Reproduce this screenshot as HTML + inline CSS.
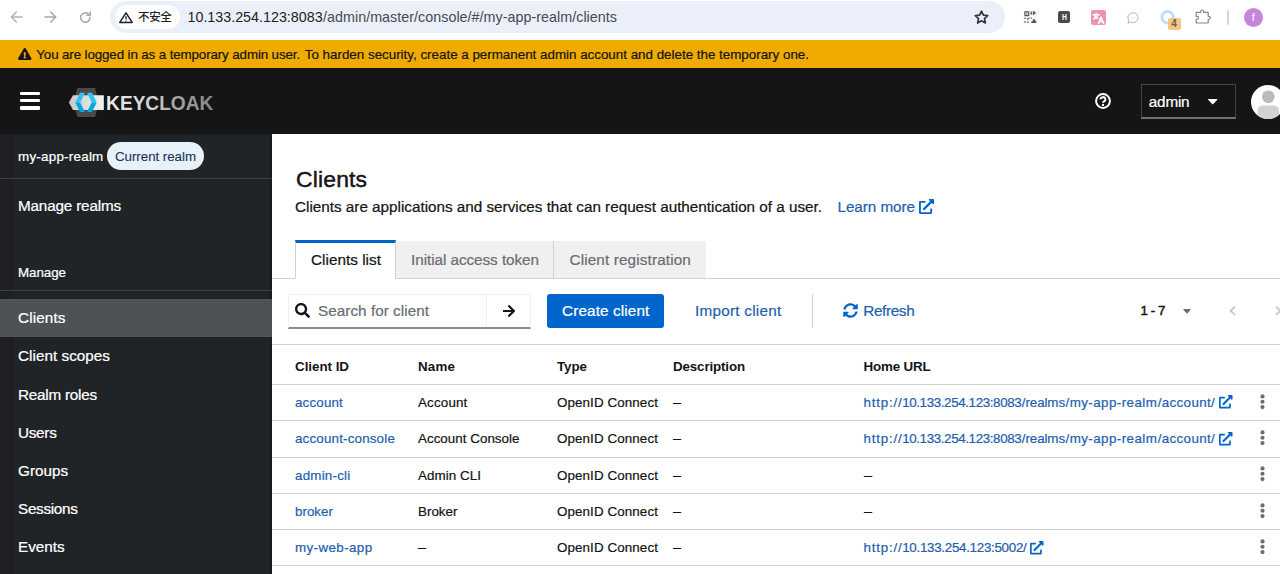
<!DOCTYPE html>
<html lang="en">
<head>
<meta charset="utf-8">
<title>Keycloak Administration Console</title>
<style>
*{box-sizing:border-box;margin:0;padding:0}
html,body{width:1280px;height:574px;overflow:hidden;background:#fff}
body{font-family:"Liberation Sans","Noto Sans CJK SC",sans-serif;color:#151515;position:relative}
.a{position:absolute}
.t{position:absolute;white-space:nowrap;line-height:20px;z-index:5;-webkit-text-stroke:.22px currentColor}
svg{position:absolute;overflow:visible;z-index:4}
.hl{position:absolute;height:1px;background:#d2d2d2}
</style>
</head>
<body>
<!-- ============ browser chrome ============ -->
<div class="a" style="left:0;top:0;width:1280px;height:40px;background:#fff"></div>
<div class="a" style="left:110px;top:1px;width:895px;height:32px;border-radius:16px;background:#ebeff9"></div>
<div class="a" style="left:115px;top:5px;width:65px;height:24px;border-radius:12px;background:#fff"></div>
<!-- back / forward / reload -->
<svg style="left:10px;top:11px" width="13" height="12" viewBox="0 0 13 12" fill="none" stroke="#b4b4b4" stroke-width="1.6" stroke-linecap="round" stroke-linejoin="round"><path d="M12 6H1.5M6.3 1L1.3 6l5 5"/></svg>
<svg style="left:44px;top:11px" width="13" height="12" viewBox="0 0 13 12" fill="none" stroke="#a8a8a8" stroke-width="1.6" stroke-linecap="round" stroke-linejoin="round"><path d="M1 6h10.5M6.7 1l5 5-5 5"/></svg>
<svg style="left:79px;top:11px" width="13" height="13" viewBox="0 0 13 13" fill="none" stroke="#a8a8a8" stroke-width="1.6" stroke-linecap="round" stroke-linejoin="round"><path d="M11 6.5a4.7 4.7 0 1 1-1.6-3.5"/><path d="M11.2 1v3.2H8" /></svg>
<!-- insecure triangle -->
<svg style="left:119px;top:12px" width="14" height="11" viewBox="0 0 14 11" fill="none" stroke="#1f1f1f" stroke-width="1.5" stroke-linejoin="round"><path d="M7 .8L13.2 10.4H.8z"/><path d="M7 4.3v3.2M7 8.4v1" stroke-width="1.3"/></svg>
<!-- star -->
<svg style="left:974.4px;top:10px" width="15" height="14" viewBox="0 0 15 14" fill="none" stroke="#34373c" stroke-width="1.7" stroke-linejoin="round"><path d="M7.5 1.2l1.9 4 4.3.5-3.2 3 .9 4.3-3.9-2.2-3.9 2.2.9-4.3-3.2-3 4.3-.5z"/></svg>
<!-- QR extension -->
<svg style="left:1022.5px;top:10px" width="14.5" height="14" viewBox="0 0 14.5 14" fill="#5a5a5a"><rect x="0" y="0" width="14.5" height="14" rx="2" fill="#fafafa"/><path d="M1.3 1.3h5v5h-5zM2.5 2.5v2.6h2.6V2.5z" fill-rule="evenodd"/><rect x="3.2" y="3.2" width="1.2" height="1.2"/><path d="M7.6 1.6h1.3v3.2H7.6zM9.8 1.3h1.5l1.7 1.9-1 1.1-.9-.9v1.6H9.8z"/><path d="M1.3 7.8h1.3v1.3H1.3zM3.6 9l2.7-1.7.6.9L4.2 10zM1.3 11.2h1.3v1.5H1.3zM3.8 11.4h2.2v1.2H3.8zM7.8 7.6h1.2v1.2H7.8z"/><path d="M8.2 12.9c0-1.4.9-2 1.7-2.1-.4-.9.1-1.9 1.1-1.9s1.6.9 1.3 1.8c.6.1 1.2.7 1.2 2.2z"/></svg>
<!-- H extension -->
<div class="a" style="left:1058px;top:11px;width:12px;height:12px;border-radius:2px;background:#4b4b4b"></div>
<!-- translate extension (pink) -->
<div class="a" style="left:1091px;top:9.5px;width:15px;height:15px;border-radius:2px;background:#e992b2"></div>
<svg style="left:1091px;top:9.5px" width="15" height="15" viewBox="0 0 15 15" fill="none" stroke="#fff" stroke-linecap="round" stroke-linejoin="round"><path d="M2 4.7h6.2M5.1 3.2v1.5M3.2 4.7c.4 1.8 1.8 3.3 3.8 4M7 4.7C6.5 6.7 4.8 8.3 2.6 9" stroke-width="1.4"/><path d="M7.6 13.4l2.5-6.2 2.5 6.2M8.5 11.5h3.2" stroke-width="1.6"/></svg>
<!-- speech bubble -->
<svg style="left:1127px;top:11.5px" width="12" height="12" viewBox="0 0 12 12" fill="none" stroke="#b5b5b5" stroke-width="1"><path d="M6.3.8a4.9 4.9 0 1 1-2.6 9.1L.9 11.3l1-2.6A4.9 4.9 0 0 1 6.3.8z"/><path d="M4.2 5.7h.6M6 5.7h.6M7.8 5.7h.6" stroke-width=".9" stroke="#c5c5c5"/></svg>
<!-- blue ring with badge -->
<svg style="left:1159.5px;top:9.5px" width="16" height="15" viewBox="0 0 16 15" fill="none"><circle cx="7.6" cy="7.3" r="5.7" stroke="#c6dcf2" stroke-width="3"/></svg>
<div class="a" style="left:1167.5px;top:17.5px;width:13px;height:12.5px;border-radius:2.5px;background:#f5c583;z-index:4"></div>
<!-- puzzle piece -->
<svg style="left:1194.5px;top:9px" width="16" height="15" viewBox="0 0 16 15" fill="none" stroke="#878787" stroke-width="1.2" stroke-linejoin="round"><path d="M1.2 3.4h4.5V2.5a1.5 1.5 0 0 1 3 0v.9h4.5v3.9h.6a1.5 1.5 0 0 1 0 3h-.6v3.7H1.2v-3.7h.8a1.5 1.5 0 0 0 0-3h-.8z"/></svg>
<!-- divider + avatar -->
<div class="a" style="left:1226.5px;top:9.5px;width:2px;height:15px;background:#c9d6ec;border-radius:1px"></div>
<div class="a" style="left:1243.7px;top:7.7px;width:19px;height:19px;border-radius:50%;background:#c585da"></div>

<!-- ============ banner ============ -->
<div class="a" style="left:0;top:40px;width:1280px;height:28px;background:#f0ab00"></div>
<svg style="left:18px;top:48px" width="13.5" height="12" viewBox="0 0 576 512"><path fill="#151515" d="M569.517 440.013C587.975 472.007 564.806 512 527.94 512H48.054c-36.937 0-59.999-40.055-41.577-71.987L246.423 23.985c18.467-32.009 64.72-31.951 83.154 0l239.94 416.028zM288 354c-25.405 0-46 20.595-46 46s20.595 46 46 46 46-20.595 46-46-20.595-46-46-46zm-43.673-165.346l7.418 136c.347 6.364 5.609 11.346 11.982 11.346h48.546c6.373 0 11.635-4.982 11.982-11.346l7.418-136c.375-6.874-5.098-12.654-11.982-12.654h-63.383c-6.884 0-12.356 5.78-11.981 12.654z"/></svg>

<!-- ============ masthead ============ -->
<div class="a" style="left:0;top:68px;width:1280px;height:66px;background:#151515"></div>
<!-- hamburger -->
<div class="a" style="left:19.5px;top:91.7px;width:20.5px;height:3.5px;border-radius:1px;background:#fff"></div>
<div class="a" style="left:19.5px;top:98.9px;width:20.5px;height:3.5px;border-radius:1px;background:#fff"></div>
<div class="a" style="left:19.5px;top:106.1px;width:20.5px;height:3.5px;border-radius:1px;background:#fff"></div>
<!-- keycloak logo -->
<svg style="left:68px;top:87px" width="150" height="31" viewBox="0 0 150 31">
  <defs>
    <linearGradient id="kg" x1="0" x2="1" y1="0" y2="0"><stop offset="0" stop-color="#ededed"/><stop offset=".45" stop-color="#d0d0d0"/><stop offset=".6" stop-color="#a9a9a9"/><stop offset="1" stop-color="#858585"/></linearGradient>
    <linearGradient id="kb" x1="0" x2="1" y1="0" y2="0"><stop offset="0" stop-color="#c9c9c9"/><stop offset="1" stop-color="#f2f2f2"/></linearGradient>
  </defs>
  <path d="M5.3 15.4L9.5 .9h17.6l3.5 14.5-3.5 14.5H9.5z" fill="#4a4a4a"/>
  <path d="M.9 15.6l4.1-7.3h30.8v14.7H5z" fill="url(#kb)"/>
  <path d="M7.2 15.4L12 5.8h5l-4.8 9.6z" fill="#2ec4ef"/>
  <path d="M7.2 15.4L12 25h5l-4.8-9.6z" fill="#00a8dc"/>
  <path d="M28.7 15.4l-4.8-9.6h-5l4.8 9.6z" fill="#2ec4ef"/>
  <path d="M28.7 15.4l-4.8 9.6h-5l4.8-9.6z" fill="#00a8dc"/>
  <text x="38.1" y="22.5" font-family="Liberation Sans, sans-serif" font-weight="bold" font-size="20.2" fill="url(#kg)" textLength="107.2" lengthAdjust="spacingAndGlyphs">KEYCLOAK</text>
</svg>
<!-- help icon -->
<svg style="left:1095px;top:92.7px" width="16" height="16" viewBox="0 0 16 16" fill="none" stroke="#fff"><circle cx="8" cy="8" r="6.9" stroke-width="2"/><path d="M5.6 6.4a2.4 2.2 0 1 1 3.5 1.9c-.7.4-1.1.8-1.1 1.5" stroke-width="2"/><circle cx="8" cy="11.9" r="1.2" fill="#fff" stroke="none"/></svg>
<!-- user dropdown -->
<div class="a" style="left:1141px;top:84px;width:95px;height:34.5px;border:1px solid #444548;border-bottom:2px solid #707477"></div>
<svg style="left:1208.4px;top:98.7px" width="9.4" height="5.4" viewBox="0 0 9.4 5.4"><path d="M.5 0h8.4a.5.5 0 0 1 .35.85L5.05 5.2a.5.5 0 0 1-.7 0L.15.85A.5.5 0 0 1 .5 0z" fill="#fff"/></svg>
<!-- avatar -->
<svg style="left:1251px;top:84.5px" width="34" height="34" viewBox="0 0 34 34"><defs><clipPath id="av"><circle cx="17" cy="17" r="17"/></clipPath></defs><circle cx="17" cy="17" r="17" fill="#fff"/><g clip-path="url(#av)"><circle cx="17.3" cy="11.8" r="6.3" fill="#b8bbbe"/><path d="M6.5 34v-8.5c0-3 2.4-5 5.5-5h10.6c3.1 0 5.5 2 5.5 5V34z" fill="#d2d2d2"/></g></svg>

<!-- ============ sidebar ============ -->
<div class="a" style="left:0;top:133px;width:272px;height:441px;background:#212427"></div>
<div class="a" style="left:269px;top:134px;width:3px;height:440px;background:linear-gradient(90deg,#212427,#17181a)"></div>
<div class="a" style="left:0;top:133px;width:272px;height:3px;background:linear-gradient(#151515,#1c1e20 60%,#212427)"></div>
<div class="a" style="left:0;top:136px;width:14px;height:438px;background:rgba(0,0,0,.09)"></div>
<div class="a" style="left:107px;top:142px;width:97px;height:28px;border-radius:14px;background:#e7f1fa"></div>
<div class="a" style="left:0;top:177.5px;width:272px;height:1px;background:#3c3f42"></div>
<div class="a" style="left:0;top:290px;width:272px;height:1px;background:#3c3f42"></div>
<div class="a" style="left:0;top:299px;width:272px;height:38px;background:#4f5255"></div>

<!-- ============ main ============ -->
<!-- tabs -->
<div class="hl" style="left:272px;top:278px;width:1008px"></div>
<div class="a" style="left:396px;top:241px;width:310px;height:37px;background:#f0f0f0"></div>
<div class="a" style="left:553px;top:241px;width:1px;height:37px;background:#d2d2d2"></div>
<div class="a" style="left:295px;top:240px;width:101px;height:39px;background:#fff;border-left:1px solid #d2d2d2;border-right:1px solid #d2d2d2;border-top:3px solid #0066cc"></div>
<!-- toolbar -->
<div class="a" style="left:288px;top:294px;width:243px;height:35px;background:#fff;border:1px solid #f0f0f0;border-bottom:2px solid #8a8d90"></div>
<div class="a" style="left:486px;top:295px;width:1px;height:32px;background:#f0f0f0"></div>
<svg style="left:295.3px;top:303.2px" width="15" height="15" viewBox="0 0 512 512"><path fill="#151515" d="M505 442.7L405.3 343c-4.5-4.5-10.6-7-17-7H372c27.6-35.3 44-79.7 44-128C416 93.1 322.9 0 208 0S0 93.1 0 208s93.1 208 208 208c48.3 0 92.7-16.4 128-44v16.3c0 6.4 2.5 12.5 7 17l99.7 99.7c9.4 9.4 24.6 9.4 33.9 0l28.3-28.3c9.4-9.4 9.4-24.6.1-34zM208 336c-70.7 0-128-57.2-128-128 0-70.7 57.2-128 128-128 70.7 0 128 57.2 128 128 0 70.7-57.2 128-128 128z"/></svg>
<svg style="left:501.5px;top:303.5px" width="14" height="14" viewBox="0 0 448 512"><path fill="#151515" d="M190.5 66.9l22.2-22.2c9.4-9.4 24.6-9.4 33.9 0L441 239c9.4 9.4 9.4 24.6 0 33.9L246.6 467.3c-9.4 9.4-24.6 9.4-33.9 0l-22.2-22.2c-9.5-9.5-9.3-25 .4-34.3L311.4 296H24c-13.3 0-24-10.7-24-24v-32c0-13.3 10.7-24 24-24h287.4L190.9 101.2c-9.8-9.3-10-24.8-.4-34.3z"/></svg>
<div class="a" style="left:547px;top:294px;width:117.4px;height:34px;border-radius:3px;background:#0066cc"></div>
<div class="a" style="left:812px;top:294px;width:1px;height:34px;background:#d2d2d2"></div>
<svg style="left:843.4px;top:303.2px" width="15" height="15" viewBox="0 0 512 512"><path fill="#0066cc" d="M370.72 133.28C339.458 104.008 298.888 87.962 255.848 88c-77.458.068-144.328 53.178-162.791 126.85-1.344 5.363-6.122 9.15-11.651 9.15H24.103c-7.498 0-13.194-6.807-11.807-14.176C33.933 94.924 134.813 8 256 8c66.448 0 126.791 26.136 171.315 68.685L463.03 40.97C478.149 25.851 504 36.559 504 57.941V192c0 13.255-10.745 24-24 24H345.941c-21.382 0-32.09-25.851-16.971-40.971l41.75-41.749zM32 296h134.059c21.382 0 32.09 25.851 16.971 40.971l-41.75 41.75c31.262 29.273 71.835 45.319 114.876 45.28 77.418-.07 144.315-53.144 162.787-126.849 1.344-5.363 6.122-9.15 11.651-9.15h57.304c7.498 0 13.194 6.807 11.807 14.176C478.067 417.076 377.187 504 256 504c-66.448 0-126.791-26.136-171.315-68.685L48.97 471.03C33.851 486.149 8 475.441 8 454.059V320c0-13.255 10.745-24 24-24z"/></svg>
<svg style="left:1183.4px;top:309.3px" width="8" height="4.7" viewBox="0 0 9 5.5"><path d="M.6 0h7.8a.5.5 0 0 1 .35.85L4.85 5.2a.5.5 0 0 1-.7 0L.25.85A.5.5 0 0 1 .6 0z" fill="#6a6e73"/></svg>
<svg style="left:1228.6px;top:306px" width="7" height="10" viewBox="0 0 7 10" fill="none" stroke="#c9c9c9" stroke-width="1.9" stroke-linecap="round" stroke-linejoin="round"><path d="M5.5 1.2L1.5 4.8l4 3.6"/></svg>
<svg style="left:1274.5px;top:306px" width="7" height="10" viewBox="0 0 7 10" fill="none" stroke="#c9c9c9" stroke-width="1.9" stroke-linecap="round" stroke-linejoin="round"><path d="M1.5 1.2l4 3.6-4 3.6"/></svg>
<!-- learn more ext icon -->
<svg class="ext" style="left:919px;top:198.7px" width="15" height="15" viewBox="0 0 512 512"><path fill="#0066cc" d="M432,320H400a16,16,0,0,0-16,16V448H64V128H208a16,16,0,0,0,16-16V80a16,16,0,0,0-16-16H48A48,48,0,0,0,0,112V464a48,48,0,0,0,48,48H400a48,48,0,0,0,48-48V336A16,16,0,0,0,432,320ZM488,0h-128c-21.37,0-32.05,25.91-17,41l35.73,35.73L135,320.37a24,24,0,0,0,0,34L157.67,377a24,24,0,0,0,34,0L435.28,133.32,471,169c15,15,41,4.5,41-17V24A24,24,0,0,0,488,0Z"/></svg>
<!-- table lines -->
<div class="hl" style="left:272px;top:344px;width:1008px"></div>
<div class="hl" style="left:272px;top:384px;width:1008px"></div>
<div class="hl" style="left:272px;top:420.3px;width:1008px"></div>
<div class="hl" style="left:272px;top:456.6px;width:1008px"></div>
<div class="hl" style="left:272px;top:492.9px;width:1008px"></div>
<div class="hl" style="left:272px;top:529.2px;width:1008px"></div>
<div class="hl" style="left:272px;top:565px;width:1008px"></div>
<svg style="left:1218.6px;top:395.4px" width="13.5" height="13.5" viewBox="0 0 512 512"><path fill="#0066cc" d="M432,320H400a16,16,0,0,0-16,16V448H64V128H208a16,16,0,0,0,16-16V80a16,16,0,0,0-16-16H48A48,48,0,0,0,0,112V464a48,48,0,0,0,48,48H400a48,48,0,0,0,48-48V336A16,16,0,0,0,432,320ZM488,0h-128c-21.370,0-32.050,25.910-17,41l35.730,35.730L135,320.370a24,24,0,0,0,0,34L157.670,377a24,24,0,0,0,34,0L435.280,133.320,471,169c15,15,41,4.500,41-17V24A24,24,0,0,0,488,0Z"/></svg>
<svg style="left:1260.4px;top:393.7px" width="5" height="16" viewBox="0 0 5 16" fill="#6a6e73"><circle cx="2.5" cy="2.4" r="2.1"/><circle cx="2.5" cy="7.75" r="2.1"/><circle cx="2.5" cy="13.1" r="2.1"/></svg>
<svg style="left:1218.6px;top:431.7px" width="13.5" height="13.5" viewBox="0 0 512 512"><path fill="#0066cc" d="M432,320H400a16,16,0,0,0-16,16V448H64V128H208a16,16,0,0,0,16-16V80a16,16,0,0,0-16-16H48A48,48,0,0,0,0,112V464a48,48,0,0,0,48,48H400a48,48,0,0,0,48-48V336A16,16,0,0,0,432,320ZM488,0h-128c-21.370,0-32.050,25.910-17,41l35.730,35.730L135,320.370a24,24,0,0,0,0,34L157.670,377a24,24,0,0,0,34,0L435.280,133.320,471,169c15,15,41,4.500,41-17V24A24,24,0,0,0,488,0Z"/></svg>
<svg style="left:1260.4px;top:430.0px" width="5" height="16" viewBox="0 0 5 16" fill="#6a6e73"><circle cx="2.5" cy="2.4" r="2.1"/><circle cx="2.5" cy="7.75" r="2.1"/><circle cx="2.5" cy="13.1" r="2.1"/></svg>
<svg style="left:1260.4px;top:466.3px" width="5" height="16" viewBox="0 0 5 16" fill="#6a6e73"><circle cx="2.5" cy="2.4" r="2.1"/><circle cx="2.5" cy="7.75" r="2.1"/><circle cx="2.5" cy="13.1" r="2.1"/></svg>
<svg style="left:1260.4px;top:502.6px" width="5" height="16" viewBox="0 0 5 16" fill="#6a6e73"><circle cx="2.5" cy="2.4" r="2.1"/><circle cx="2.5" cy="7.75" r="2.1"/><circle cx="2.5" cy="13.1" r="2.1"/></svg>
<svg style="left:1030.1px;top:540.6px" width="13.5" height="13.5" viewBox="0 0 512 512"><path fill="#0066cc" d="M432,320H400a16,16,0,0,0-16,16V448H64V128H208a16,16,0,0,0,16-16V80a16,16,0,0,0-16-16H48A48,48,0,0,0,0,112V464a48,48,0,0,0,48,48H400a48,48,0,0,0,48-48V336A16,16,0,0,0,432,320ZM488,0h-128c-21.370,0-32.050,25.910-17,41l35.730,35.730L135,320.370a24,24,0,0,0,0,34L157.670,377a24,24,0,0,0,34,0L435.280,133.320,471,169c15,15,41,4.500,41-17V24A24,24,0,0,0,488,0Z"/></svg>
<svg style="left:1260.4px;top:538.9px" width="5" height="16" viewBox="0 0 5 16" fill="#6a6e73"><circle cx="2.5" cy="2.4" r="2.1"/><circle cx="2.5" cy="7.75" r="2.1"/><circle cx="2.5" cy="13.1" r="2.1"/></svg>
<!-- ============ text ============ -->
<span class="t" style="left:138px;top:7.20px;font-size:11.50px;color:#1f1f1f;font-weight:500;letter-spacing:-0.333px;-webkit-text-stroke:0;">不安全</span>
<span class="t" style="left:187.5px;top:7.00px;font-size:14.30px;color:#1f1f1f;letter-spacing:-0.004px;-webkit-text-stroke:0;">10.133.254.123:8083</span>
<span class="t" style="left:323px;top:7.00px;font-size:14.30px;color:#474a4f;letter-spacing:0.036px;-webkit-text-stroke:0;">/admin/master/console/#/my-app-realm/clients</span>
<span class="t" style="left:1060.6px;top:7.10px;font-size:9.80px;color:#ffffff;font-weight:bold;-webkit-text-stroke:0;transform:scaleX(.7);">H</span>
<span class="t" style="left:1171.2px;top:13.80px;font-size:10.00px;color:#606060;font-weight:bold;-webkit-text-stroke:0;">4</span>
<span class="t" style="left:1251.8px;top:7.20px;font-size:11.00px;color:#ffffff;-webkit-text-stroke:0;">f</span>
<span class="t" style="left:36.3px;top:44.70px;font-size:13.37px;color:#151515;letter-spacing:-0.123px;">You are logged in as a temporary admin user.</span>
<span class="t" style="left:304.8px;top:44.70px;font-size:13.37px;color:#151515;letter-spacing:0.002px;">To harden security, create a permanent admin account and delete the temporary one.</span>
<span class="t" style="left:1148.8px;top:92.00px;font-size:15.28px;color:#ffffff;letter-spacing:-0.196px;">admin</span>
<span class="t" style="left:18px;top:146.50px;font-size:13.37px;color:#ffffff;letter-spacing:0.258px;">my-app-realm</span>
<span class="t" style="left:115px;top:146.50px;font-size:13.37px;color:#1b3558;letter-spacing:-0.052px;-webkit-text-stroke:.1px currentColor;">Current realm</span>
<span class="t" style="left:18px;top:195.50px;font-size:15.28px;color:#ffffff;letter-spacing:-0.171px;">Manage realms</span>
<span class="t" style="left:18px;top:263.00px;font-size:13.37px;color:#ffffff;letter-spacing:-0.047px;">Manage</span>
<span class="t" style="left:18px;top:308.00px;font-size:15.28px;color:#ffffff;letter-spacing:0.118px;">Clients</span>
<span class="t" style="left:18px;top:346.30px;font-size:15.28px;color:#ffffff;letter-spacing:0.028px;">Client scopes</span>
<span class="t" style="left:18px;top:384.50px;font-size:15.28px;color:#ffffff;letter-spacing:-0.241px;">Realm roles</span>
<span class="t" style="left:18px;top:422.70px;font-size:15.28px;color:#ffffff;letter-spacing:-0.275px;">Users</span>
<span class="t" style="left:18px;top:461.00px;font-size:15.28px;color:#ffffff;letter-spacing:0.023px;">Groups</span>
<span class="t" style="left:18px;top:499.20px;font-size:15.28px;color:#ffffff;letter-spacing:-0.294px;">Sessions</span>
<span class="t" style="left:18px;top:537.40px;font-size:15.28px;color:#ffffff;letter-spacing:-0.012px;">Events</span>
<span class="t" style="left:296px;top:169.40px;font-size:22.92px;color:#151515;letter-spacing:0.167px;-webkit-text-stroke:.45px #151515;">Clients</span>
<span class="t" style="left:295px;top:196.50px;font-size:15.28px;color:#151515;letter-spacing:-0.010px;">Clients are applications and services that can request authentication of a user.</span>
<span class="t" style="left:837.5px;top:196.50px;font-size:15.28px;color:#1f5fae;letter-spacing:-0.058px;">Learn more</span>
<span class="t" style="left:311px;top:250.00px;font-size:15.28px;color:#151515;letter-spacing:0.036px;">Clients list</span>
<span class="t" style="left:411px;top:250.00px;font-size:15.28px;color:#6a6e73;letter-spacing:-0.049px;">Initial access token</span>
<span class="t" style="left:569.5px;top:250.00px;font-size:15.28px;color:#6a6e73;letter-spacing:0.142px;">Client registration</span>
<span class="t" style="left:318px;top:300.90px;font-size:15.28px;color:#6a6e73;letter-spacing:0.040px;">Search for client</span>
<span class="t" style="left:562px;top:300.90px;font-size:15.28px;color:#ffffff;letter-spacing:0.138px;">Create client</span>
<span class="t" style="left:695px;top:300.90px;font-size:15.28px;color:#1f5fae;letter-spacing:0.257px;">Import client</span>
<span class="t" style="left:863.2px;top:300.90px;font-size:15.28px;color:#1f5fae;letter-spacing:-0.336px;">Refresh</span>
<span class="t" style="left:1140.5px;top:301.20px;font-size:13.37px;color:#151515;letter-spacing:-0.447px;-webkit-text-stroke:.45px currentColor;">1 - 7</span>
<span class="t" style="left:295px;top:356.50px;font-size:13.37px;color:#151515;font-weight:bold;-webkit-text-stroke:0;letter-spacing:-0.021px;">Client ID</span>
<span class="t" style="left:418px;top:356.50px;font-size:13.37px;color:#151515;font-weight:bold;-webkit-text-stroke:0;letter-spacing:0.152px;">Name</span>
<span class="t" style="left:557px;top:356.50px;font-size:13.37px;color:#151515;font-weight:bold;-webkit-text-stroke:0;letter-spacing:-0.051px;">Type</span>
<span class="t" style="left:673px;top:356.50px;font-size:13.37px;color:#151515;font-weight:bold;-webkit-text-stroke:0;letter-spacing:-0.136px;">Description</span>
<span class="t" style="left:863.6px;top:356.50px;font-size:13.37px;color:#151515;font-weight:bold;-webkit-text-stroke:0;letter-spacing:-0.187px;">Home URL</span>
<span class="t" style="left:295px;top:392.90px;font-size:13.37px;color:#1f5fae;letter-spacing:0.172px;">account</span>
<span class="t" style="left:418px;top:392.90px;font-size:13.37px;color:#151515;letter-spacing:0.174px;">Account</span>
<span class="t" style="left:557px;top:392.90px;font-size:13.37px;color:#151515;letter-spacing:0.106px;">OpenID Connect</span>
<span class="t" style="left:673px;top:392.90px;font-size:13.37px;color:#151515;transform:translateY(.3px) scaleX(.6);transform-origin:0 50%;">—</span>
<span class="t" style="left:863.6px;top:392.90px;font-size:13.37px;color:#1f5fae;letter-spacing:0.768px;">http://</span>
<span class="t" style="left:902.2px;top:392.90px;font-size:13.37px;color:#1f5fae;letter-spacing:-0.379px;">10.133.254.123:8083</span>
<span class="t" style="left:1021.8px;top:392.90px;font-size:13.37px;color:#1f5fae;letter-spacing:-0.085px;">/realms</span>
<span class="t" style="left:1065.5px;top:392.90px;font-size:13.37px;color:#1f5fae;letter-spacing:0.437px;">/my-app-realm</span>
<span class="t" style="left:1157.8px;top:392.90px;font-size:13.37px;color:#1f5fae;letter-spacing:0.331px;">/account/</span>
<span class="t" style="left:295px;top:429.20px;font-size:13.37px;color:#1f5fae;letter-spacing:0.180px;">account-console</span>
<span class="t" style="left:418px;top:429.20px;font-size:13.37px;color:#151515;letter-spacing:0.033px;">Account Console</span>
<span class="t" style="left:557px;top:429.20px;font-size:13.37px;color:#151515;letter-spacing:0.106px;">OpenID Connect</span>
<span class="t" style="left:673px;top:429.20px;font-size:13.37px;color:#151515;transform:translateY(.3px) scaleX(.6);transform-origin:0 50%;">—</span>
<span class="t" style="left:863.6px;top:429.20px;font-size:13.37px;color:#1f5fae;letter-spacing:0.768px;">http://</span>
<span class="t" style="left:902.2px;top:429.20px;font-size:13.37px;color:#1f5fae;letter-spacing:-0.379px;">10.133.254.123:8083</span>
<span class="t" style="left:1021.8px;top:429.20px;font-size:13.37px;color:#1f5fae;letter-spacing:-0.085px;">/realms</span>
<span class="t" style="left:1065.5px;top:429.20px;font-size:13.37px;color:#1f5fae;letter-spacing:0.437px;">/my-app-realm</span>
<span class="t" style="left:1157.8px;top:429.20px;font-size:13.37px;color:#1f5fae;letter-spacing:0.331px;">/account/</span>
<span class="t" style="left:295px;top:465.50px;font-size:13.37px;color:#1f5fae;letter-spacing:0.227px;">admin-cli</span>
<span class="t" style="left:418px;top:465.50px;font-size:13.37px;color:#151515;letter-spacing:0.069px;">Admin CLI</span>
<span class="t" style="left:557px;top:465.50px;font-size:13.37px;color:#151515;letter-spacing:0.106px;">OpenID Connect</span>
<span class="t" style="left:673px;top:465.50px;font-size:13.37px;color:#151515;transform:translateY(.3px) scaleX(.6);transform-origin:0 50%;">—</span>
<span class="t" style="left:864px;top:465.50px;font-size:13.37px;color:#151515;transform:translateY(.3px) scaleX(.6);transform-origin:0 50%;">—</span>
<span class="t" style="left:295px;top:501.80px;font-size:13.37px;color:#1f5fae;letter-spacing:0.021px;">broker</span>
<span class="t" style="left:418px;top:501.80px;font-size:13.37px;color:#151515;letter-spacing:0.023px;">Broker</span>
<span class="t" style="left:557px;top:501.80px;font-size:13.37px;color:#151515;letter-spacing:0.106px;">OpenID Connect</span>
<span class="t" style="left:673px;top:501.80px;font-size:13.37px;color:#151515;transform:translateY(.3px) scaleX(.6);transform-origin:0 50%;">—</span>
<span class="t" style="left:864px;top:501.80px;font-size:13.37px;color:#151515;transform:translateY(.3px) scaleX(.6);transform-origin:0 50%;">—</span>
<span class="t" style="left:295px;top:538.10px;font-size:13.37px;color:#1f5fae;letter-spacing:0.398px;">my-web-app</span>
<span class="t" style="left:418px;top:538.10px;font-size:13.37px;color:#151515;transform:translateY(.3px) scaleX(.6);transform-origin:0 50%;">—</span>
<span class="t" style="left:557px;top:538.10px;font-size:13.37px;color:#151515;letter-spacing:0.106px;">OpenID Connect</span>
<span class="t" style="left:673px;top:538.10px;font-size:13.37px;color:#151515;transform:translateY(.3px) scaleX(.6);transform-origin:0 50%;">—</span>
<span class="t" style="left:863.6px;top:538.10px;font-size:13.37px;color:#1f5fae;letter-spacing:0.768px;">http://</span>
<span class="t" style="left:902.2px;top:538.10px;font-size:13.37px;color:#1f5fae;letter-spacing:-0.286px;">10.133.254.123:5002/</span>
</body>
</html>
